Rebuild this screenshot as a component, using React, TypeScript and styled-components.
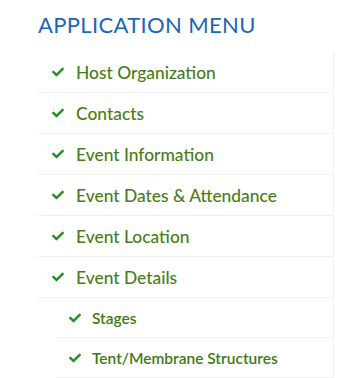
import styled, { createGlobalStyle } from "styled-components";
import { FaCheck } from "react-icons/fa";

const GlobalStyle = createGlobalStyle`
  body {
    margin: 0;
    background: #ffffff;
    font-family: "Lato", "Open Sans", sans-serif;
  }
`;

const Wrapper = styled.div`
  padding: 12px 0 0 38px;
  width: 337px;
  box-sizing: border-box;
`;

const Title = styled.h2`
  margin: 0 0 14px 0;
  font-family: "Lato", sans-serif;
  font-weight: 400;
  font-size: 22px;
  line-height: 26px;
  letter-spacing: 0.35px;
  color: #1b66b6;
`;

const Menu = styled.ul`
  list-style: none;
  margin: 0;
  padding: 0;
  width: 295px;
  border-right: 1px solid #f2f2f2;
`;

const Item = styled.li<{ $sub?: boolean }>`
  display: flex;
  align-items: center;
  gap: ${(p) => (p.$sub ? "11px" : "12px")};
  height: ${(p) => (p.$sub ? "39px" : "40px")};
  margin-left: ${(p) => (p.$sub ? "18px" : "0")};
  padding-left: ${(p) => (p.$sub ? "13px" : "14px")};
  border-bottom: 1px solid #f0f0f0;
  color: ${(p) => (p.$sub ? "#3f7a16" : "#4a7d18")};
  font-size: ${(p) => (p.$sub ? "15.5px" : "17.4px")};
  font-weight: ${(p) => (p.$sub ? 600 : 500)};
  svg {
    flex-shrink: 0;
    color: #249024;
    width: 12px;
    height: 12px;
  }
`;

const items = [
  { label: "Host Organization" },
  { label: "Contacts" },
  { label: "Event Information" },
  { label: "Event Dates & Attendance" },
  { label: "Event Location" },
  { label: "Event Details" },
  { label: "Stages", sub: true },
  { label: "Tent/Membrane Structures", sub: true },
];

export default function App() {
  return (
    <>
      <GlobalStyle />
      <Wrapper>
        <Title>APPLICATION MENU</Title>
        <Menu>
          {items.map((it) => (
            <Item key={it.label} $sub={it.sub}>
              <FaCheck />
              <span>{it.label}</span>
            </Item>
          ))}
        </Menu>
      </Wrapper>
    </>
  );
}
